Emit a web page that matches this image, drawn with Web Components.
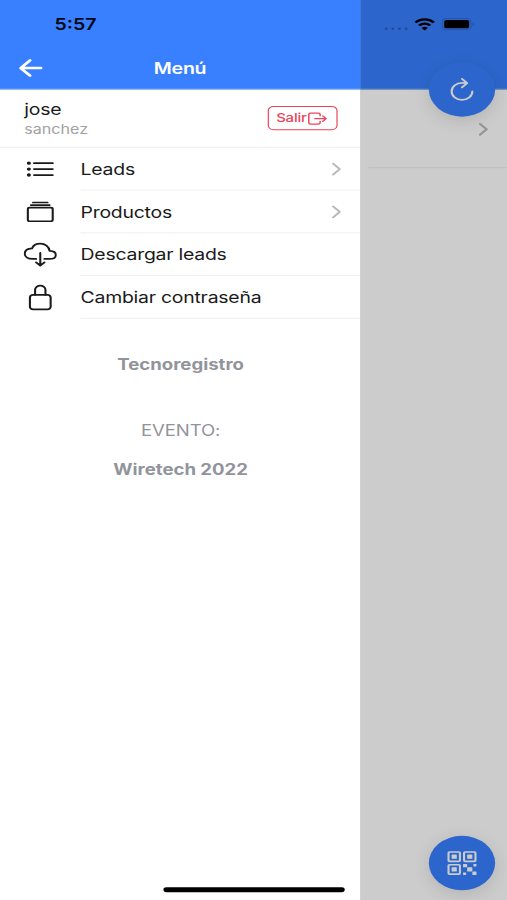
<!DOCTYPE html>
<html lang="es">
<head>
<meta charset="utf-8">
<meta name="viewport" content="width=device-width, initial-scale=1">
<title>Menú</title>
<style>
	html, body {
		margin: 0;
		height: 100%;
		overflow: hidden;
		background: #fff;
	}
</style>
</head>
<body>
<phone-app></phone-app>
<script>
const icons = {
	back: '<path d="M244 400L100 256l144-144M120 256h292" stroke-width="48"/>',
	chevron: '<path d="M184 112l144 144-144 144" stroke-width="48"/>',
	list: '<path d="M160 144h288M160 256h288M160 368h288"/><g fill="currentColor"><circle cx="80" cy="144" r="16"/><circle cx="80" cy="256" r="16"/><circle cx="80" cy="368" r="16"/></g>',
	albums: '<rect x="64" y="176" width="384" height="256" rx="29"/><path d="M144 80h224M112 128h288"/>',
	download: '<path d="M320 336h76c55 0 100-21.21 100-75.6s-53-73.47-96-75.6C391.11 99.74 329 48 256 48c-69 0-113.44 45.79-128 91.2-60 5.7-112 35.88-112 98.4S70 336 136 336h56M192 400.1l64 63.9 64-63.9M256 224v224"/>',
	lock: '<path d="M336 208v-95a80 80 0 00-160 0v95"/><rect x="96" y="208" width="320" height="272" rx="48"/>',
	exit: '<path d="M320 176v-40a40 40 0 00-40-40H88a40 40 0 00-40 40v240a40 40 0 0040 40h192a40 40 0 0040-40v-40M384 176l80 80-80 80M191 256h273" stroke-width="36"/>',
	refresh: '<path d="M320 146s24.36-12-64-12a160 160 0 10160 160M256 58l80 80-80 80"/>',
	qr: `<g fill="currentColor" stroke="none"><rect x="336" y="336" width="80" height="80" rx="8"/><rect x="272" y="272" width="64" height="64" rx="8"/><rect x="416" y="416" width="64" height="64" rx="8"/><rect x="432" y="272" width="48" height="48" rx="8"/><rect x="272" y="432" width="48" height="48" rx="8"/><rect x="336" y="96" width="80" height="80" rx="8"/><rect x="96" y="96" width="80" height="80" rx="8"/><rect x="96" y="336" width="80" height="80" rx="8"/></g>
		<rect x="288" y="48" width="176" height="176" rx="16"/><rect x="48" y="48" width="176" height="176" rx="16"/><rect x="48" y="288" width="176" height="176" rx="16"/>`
};

class AppIcon extends HTMLElement {
	constructor() {
		super();
		this.attachShadow({ mode: 'open' });
	}

	connectedCallback() {
		this.shadowRoot.innerHTML = `
		<style>
			:host {
				display: block;
				flex: none;
				width: 28px;
				height: 28px;
			}
			svg {
				display: block;
				width: 100%;
				height: 100%;
				fill: none;
				stroke: currentColor;
				stroke-linecap: round;
				stroke-linejoin: round;
			}
		</style>
		<svg viewBox="0 0 512 512" stroke-width="32">${icons[this.getAttribute('name')]}</svg>`;
	}
}
customElements.define('app-icon', AppIcon);

class AppToolbar extends HTMLElement {
	constructor() {
		super();
		this.attachShadow({ mode: 'open' });
		this.shadowRoot.innerHTML = `
		<style>
			:host {
				display: grid;
				grid-template-columns: 48px 1fr 48px;
				align-items: center;
				box-sizing: border-box;
				height: 91.5px;
				padding-top: 49.5px;
				background: #3880ff;
				border-bottom: 1px solid #6a9fef;
				color: #fff;
				font-size: 16.5px;
				font-weight: 600;
				letter-spacing: -0.2px;
				text-align: center;
			}
			.start {
				padding-left: 12px;
			}
		</style>
		<div class="start"><slot name="start"></slot></div>
		<div><slot></slot></div>`;
	}
}
customElements.define('app-toolbar', AppToolbar);

class MenuItem extends HTMLElement {
	constructor() {
		super();
		this.attachShadow({ mode: 'open' });
	}

	connectedCallback() {
		const detail = this.hasAttribute('detail');
		this.shadowRoot.innerHTML = `
		<style>
			:host {
				display: flex;
				align-items: center;
				gap: 20px;
				height: 44px;
				padding-left: 20px;
				color: #1a1a1a;
				font-size: 16.4px;
				letter-spacing: -0.2px;
			}
			.inner {
				flex: 1;
				display: flex;
				align-items: center;
				justify-content: space-between;
				box-sizing: border-box;
				height: 100%;
				padding-right: 10px;
				border-bottom: 1px solid #efefef;
				white-space: nowrap;
			}
			.chevron {
				width: 20px;
				height: 20px;
				color: #b9b9b9;
			}
		</style>
		<app-icon name="${this.getAttribute('icon')}"></app-icon>
		<div class="inner"><slot></slot>${detail ? '<app-icon class="chevron" name="chevron"></app-icon>' : ''}</div>`;
	}
}
customElements.define('menu-item', MenuItem);

class UserRow extends HTMLElement {
	constructor() {
		super();
		this.attachShadow({ mode: 'open' });
		this.shadowRoot.innerHTML = `
		<style>
			:host {
				display: flex;
				align-items: center;
				justify-content: space-between;
				box-sizing: border-box;
				height: 60.5px;
				padding: 0 19.5px 0 20.5px;
				border-bottom: 1px solid #efefef;
			}
			.text {
				padding-top: 2px;
			}
			.name {
				color: #1a1a1a;
				font-size: 16.4px;
				line-height: 21px;
				letter-spacing: -0.2px;
			}
			.surname {
				color: #a2a2a2;
				font-size: 13.6px;
				line-height: 20px;
			}
			button {
				display: flex;
				align-items: center;
				justify-content: center;
				box-sizing: border-box;
				width: 59px;
				height: 24.5px;
				margin: 0;
				padding: 0;
				border: 1px solid #eb445a;
				border-radius: 5px;
				background: none;
				color: #eb445a;
				font: 500 12.6px/1 Inter, sans-serif;
				letter-spacing: -0.15px;
			}
			button span {
				padding-top: 3px;
			}
			app-icon {
				width: 18px;
				height: 18px;
				margin-top: 1px;
			}
		</style>
		<div class="text">
			<div class="name"><slot name="name"></slot></div>
			<div class="surname"><slot name="surname"></slot></div>
		</div>
		<button><span>Salir</span><app-icon name="exit"></app-icon></button>`;
	}
}
customElements.define('user-row', UserRow);

class EventInfo extends HTMLElement {
	constructor() {
		super();
		this.attachShadow({ mode: 'open' });
		this.shadowRoot.innerHTML = `
		<style>
			:host {
				display: block;
				padding: 38px 0 0 1px;
				color: #92949c;
				font-size: 15.7px;
				line-height: 20px;
				text-align: center;
			}
			.app, .event {
				font-weight: 700;
			}
			.label {
				margin: 47.5px 0 20.5px;
				letter-spacing: -0.1px;
			}
		</style>
		<div class="app"><slot name="app"></slot></div>
		<div class="label">EVENTO:</div>
		<div class="event"><slot name="event"></slot></div>`;
	}
}
customElements.define('event-info', EventInfo);

class SideMenu extends HTMLElement {
	constructor() {
		super();
		this.attachShadow({ mode: 'open' });
		this.shadowRoot.innerHTML = `
		<style>
			:host {
				display: block;
				width: 304px;
				background: #fff;
			}
		</style>
		<app-toolbar><app-icon slot="start" name="back"></app-icon>Menú</app-toolbar>
		<user-row><span slot="name">jose</span><span slot="surname">sanchez</span></user-row>
		<menu-item icon="list" detail>Leads</menu-item>
		<menu-item icon="albums" detail>Productos</menu-item>
		<menu-item icon="download">Descargar leads</menu-item>
		<menu-item icon="lock">Cambiar contraseña</menu-item>
		<event-info><span slot="app">Tecnoregistro</span><span slot="event">Wiretech 2022</span></event-info>`;
	}
}
customElements.define('side-menu', SideMenu);

class FabButton extends HTMLElement {
	constructor() {
		super();
		this.attachShadow({ mode: 'open' });
	}

	connectedCallback() {
		this.shadowRoot.innerHTML = `
		<style>
			:host {
				display: grid;
				place-items: center;
				width: 56px;
				height: 56px;
				border-radius: 50%;
				background: #3880ff;
				box-shadow: 0 4px 16px rgba(0, 0, 0, .12);
				color: #fff;
			}
		</style>
		<app-icon name="${this.getAttribute('icon')}"></app-icon>`;
	}
}
customElements.define('fab-button', FabButton);

// page that stays visible behind the open menu
class LeadsPage extends HTMLElement {
	constructor() {
		super();
		this.attachShadow({ mode: 'open' });
		this.shadowRoot.innerHTML = `
		<style>
			:host {
				display: block;
				background: #fff;
			}
			.row {
				display: flex;
				align-items: center;
				justify-content: flex-end;
				box-sizing: border-box;
				height: 81px;
				margin-left: 311px;
				padding: 2px 10px 0 0;
				border-bottom: 1px solid #efefef;
			}
			.row app-icon {
				width: 20px;
				height: 20px;
				color: #b9b9b9;
			}
			fab-button {
				position: absolute;
				right: 10px;
			}
			.top {
				top: 64px;
			}
			.bottom {
				bottom: 10px;
			}
			.backdrop {
				position: absolute;
				inset: 0;
				background: rgba(0, 0, 0, .2);
			}
		</style>
		<app-toolbar></app-toolbar>
		<div class="row"><app-icon name="chevron"></app-icon></div>
		<fab-button class="top" icon="refresh"></fab-button>
		<fab-button class="bottom" icon="qr"></fab-button>
		<div class="backdrop"></div>`;
	}
}
customElements.define('leads-page', LeadsPage);

class StatusBar extends HTMLElement {
	constructor() {
		super();
		this.attachShadow({ mode: 'open' });
		this.shadowRoot.innerHTML = `
		<style>
			:host {
				display: flex;
				align-items: center;
				justify-content: space-between;
				box-sizing: border-box;
				height: 50px;
				padding: 0 27px 0 46px;
				color: #000814;
				font-size: 16.5px;
				font-weight: 600;
			}
			svg {
				display: block;
			}
		</style>
		<span>5:57</span>
		<svg width="78" height="16" viewBox="0 0 78 16">
			<g fill="#1d4a96"><circle cx="3" cy="12.5" r="1.2"/><circle cx="8.6" cy="12.5" r="1.2"/><circle cx="14.2" cy="12.5" r="1.2"/><circle cx="19.8" cy="12.5" r="1.2"/></g>
			<g fill="none" stroke="#000" stroke-width="2.3"><path d="M27.7 6.1a11.2 11.2 0 0 1 15.6 0M30.8 9.3a6.8 6.8 0 0 1 9.4 0"/></g>
			<path d="M35.5 14.5l-2.7-2.7a3.8 3.8 0 0 1 5.4 0z"/>
			<rect x="50.5" y="2" width="24" height="11.5" rx="3" fill="none" stroke="#2457a9"/>
			<rect x="52" y="3.5" width="21" height="8.5" rx="1.6"/>
			<path d="M76 6v4a2.2 2.2 0 0 0 0-4z" fill="#2457a9"/>
		</svg>`;
	}
}
customElements.define('status-bar', StatusBar);

class PhoneApp extends HTMLElement {
	constructor() {
		super();
		this.attachShadow({ mode: 'open' });
		// 428x926 screen stretched over the 507x900 window
		this.shadowRoot.innerHTML = `
		<style>
			:host {
				display: grid;
				position: relative;
				width: 428px;
				height: 926px;
				overflow: hidden;
				transform: scale(1.184579, .971922);
				transform-origin: 0 0;
				font-family: Inter, sans-serif;
			}
			leads-page, side-menu {
				grid-area: 1 / 1;
				position: relative;
			}
			status-bar {
				position: absolute;
				top: 0;
				left: 0;
				right: 0;
			}
			.home {
				position: absolute;
				bottom: 8px;
				left: 50%;
				width: 153px;
				height: 5px;
				margin-left: -76px;
				border-radius: 3px;
				background: #000;
			}
		</style>
		<leads-page></leads-page>
		<side-menu></side-menu>
		<status-bar></status-bar>
		<div class="home"></div>`;
	}
}
customElements.define('phone-app', PhoneApp);
</script>
</body>
</html>
